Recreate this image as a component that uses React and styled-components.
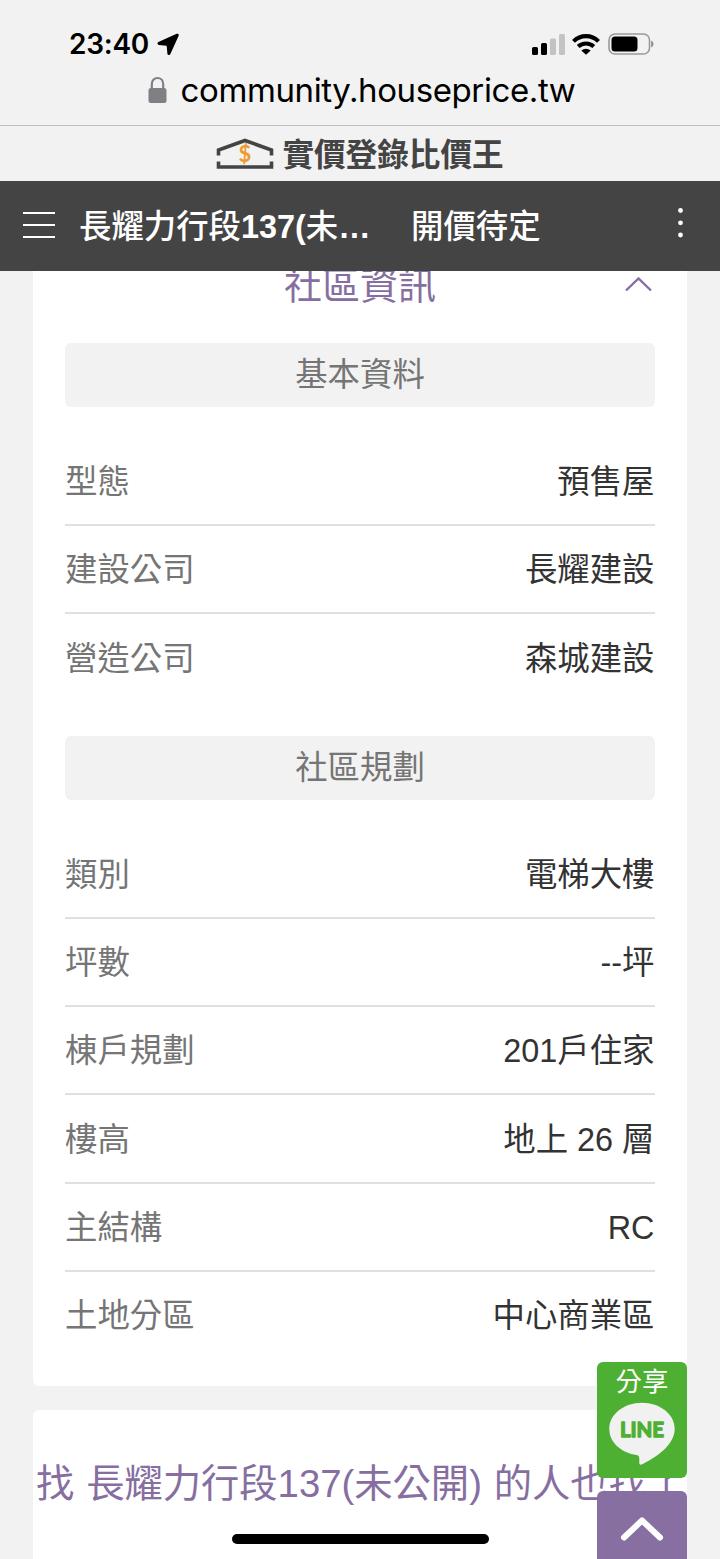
import React from "react";
import styled, { createGlobalStyle } from "styled-components";

const Global = createGlobalStyle`
  * { box-sizing: border-box; }
  html, body { margin: 0; background: #f2f2f2; }
  body { font-family: "Liberation Sans", "Noto Sans CJK TC", sans-serif; }
`;

const Screen = styled.div`
  position: relative;
  width: 720px;
  height: 1559px;
  overflow: hidden;
  display: flex;
  flex-direction: column;
  background: #f2f2f2;
`;

const BrowserChrome = styled.header`
  height: 126px;
  border-bottom: 1px solid #bfbfc1;
  font-family: Inter, "Liberation Sans", sans-serif;
  color: #000;
`;

const StatusBar = styled.div`
  display: flex;
  justify-content: space-between;
  align-items: center;
  height: 60px;
  padding: 28px 66px 0 69px;
`;

const StatusGroup = styled.div`
  display: flex;
  align-items: center;
  gap: ${(p) => p.$gap}px;
`;

const Clock = styled.span`
  font-size: 28px;
  line-height: 32px;
  font-weight: 600;
  letter-spacing: -0.25px;
`;

const AddressBar = styled.div`
  display: flex;
  justify-content: center;
  align-items: center;
  height: 60px;
  gap: 14px;
  padding-left: 3px;
`;

const Domain = styled.span`
  font-size: 33px;
  line-height: 40px;
  letter-spacing: -0.4px;
  white-space: nowrap;
`;

const BrandBar = styled.div`
  display: flex;
  justify-content: center;
  align-items: center;
  gap: 8px;
  height: 55px;
`;

const BrandName = styled.span`
  padding-bottom: 4px;
  font-family: "Noto Sans CJK TC", sans-serif;
  font-size: 31.6px;
  line-height: 40px;
  font-weight: 700;
  color: #444;
`;

const NavBar = styled.nav`
  display: flex;
  align-items: center;
  height: 90px;
  padding: 0 37px 0 23px;
  background: #444;
  color: #fff;
  font-size: 32.4px;
  line-height: 48px;
  white-space: nowrap;
`;

const NavTitle = styled.span`
  width: 292px;
  margin-left: 24px;
  padding-top: 2px;
  overflow: hidden;
  text-overflow: ellipsis;
  font-weight: 700;
`;

const MediumText = styled.span`
  font-weight: 500;
`;

const NavPrice = styled.span`
  margin-left: 40px;
  padding-top: 2px;
  flex: 1;
  font-weight: 500;
`;

const Content = styled.main`
  flex: 1;
  min-height: 0;
  overflow: hidden;
  padding: 0 33px;
`;

const InfoCard = styled.section`
  height: 1115px;
  padding: 0 32px;
  background: #fff;
  border-radius: 0 0 6px 6px;
`;

const CardHeading = styled.div`
  display: grid;
  grid-template-columns: 1fr auto 1fr;
  align-items: center;
  height: 72.4px;
  padding: 0 3px;
`;

const CardTitle = styled.h2`
  grid-column: 2;
  margin: -43px 0 0;
  font-size: 38px;
  line-height: 56px;
  font-weight: 400;
  color: #866ea1;
`;

const Toggle = styled.span`
  justify-self: end;
  display: flex;
  margin-top: -45px;
`;

const SectionLabel = styled.h3`
  height: 64px;
  margin: 0;
  border-radius: 6px;
  background: #f2f2f2;
  color: #757575;
  font-size: 32.4px;
  line-height: 64px;
  font-weight: 400;
  text-align: center;
`;

const Rows = styled.dl`
  margin: 30.2px 0 33.7px;
`;

const Row = styled.div`
  display: flex;
  justify-content: space-between;
  align-items: center;
  height: 88.3px;
  padding: 2.4px 0.5px 0 0;
  border-bottom: 2px solid #e0e0e0;
  font-size: 32.4px;
  line-height: 48px;
  &:last-child { border-bottom-color: transparent; }
`;

const Term = styled.dt`
  color: #757575;
`;

const Value = styled.dd`
  margin: 0;
  color: #333;
`;

const RelatedCard = styled.section`
  height: 200px;
  margin-top: 24px;
  padding: 44px 0 0 3px;
  overflow: hidden;
  background: #fff;
  border-radius: 6px 6px 0 0;
`;

const RelatedTitle = styled.h2`
  margin: 0;
  font-size: 38.3px;
  line-height: 60px;
  font-weight: 400;
  word-spacing: 1.2px;
  color: #866ea1;
  white-space: nowrap;
`;

const FloatingActions = styled.aside`
  position: absolute;
  right: 33px;
  bottom: 0;
  width: 90px;
  display: flex;
  flex-direction: column;
  gap: 13px;
`;

const ShareButton = styled.div`
  display: flex;
  flex-direction: column;
  align-items: center;
  height: 116px;
  border-radius: 6px;
  background: #4eb032;
  color: #fff;
  font-size: 26.4px;
  line-height: 40px;
`;

const TopButton = styled.div`
  display: flex;
  justify-content: center;
  height: 68px;
  padding-top: 23px;
  border-radius: 6px 6px 0 0;
  background: #876fa2;
`;

const HomeIndicator = styled.div`
  position: absolute;
  left: 231.5px;
  bottom: 15.5px;
  width: 257.5px;
  height: 9.5px;
  border-radius: 5px;
  background: #000;
`;

const basics = [
  ["型態", "預售屋"],
  ["建設公司", "長耀建設"],
  ["營造公司", "森城建設"],
];

const planning = [
  ["類別", "電梯大樓"],
  ["坪數", "--坪"],
  ["棟戶規劃", "201戶住家"],
  ["樓高", "地上 26 層"],
  ["主結構", "RC"],
  ["土地分區", "中心商業區"],
];

function InfoRows({ items }) {
  return (
    <Rows>
      {items.map(([term, value]) => (
        <Row key={term}>
          <Term>{term}</Term>
          <Value>{value}</Value>
        </Row>
      ))}
    </Rows>
  );
}

const LocationIcon = () => (
  <svg width="23" height="23" viewBox="0 0 23 23">
    <path d="M20.3 2.2 2 10.400 9.800 11.300 11.200 12.800 11.900 20.500Z" fill="#000" stroke="#000" strokeWidth="3" strokeLinejoin="round" />
  </svg>
);

const SignalIcon = () => (
  <svg width="33" height="21" viewBox="0 0 33 21">
    <rect x="0" y="13" width="6" height="8" rx="1.6" />
    <rect x="9" y="9" width="6" height="12" rx="1.6" />
    <rect x="18" y="4.5" width="6" height="16.5" rx="1.6" fill="#c3c3c3" />
    <rect x="27" y="0" width="6" height="21" rx="1.6" fill="#c3c3c3" />
  </svg>
);

const WifiIcon = () => (
  <svg width="28" height="21" viewBox="0 0 28 21" fill="none" stroke="#000" strokeWidth="4.1">
    <path d="M1.5 7.4C8.5.4 19.5.4 26.5 7.4" />
    <path d="M6.2 12.600C10.500 8.500 17.500 8.500 21.800 12.600" />
    <path d="M9.300 16.600Q14 12.700 18.700 16.600L14 20.800Z" fill="#000" stroke="none" />
  </svg>
);

const BatteryIcon = () => (
  <svg width="47" height="22" viewBox="0 0 47 22">
    <rect x="2" y="1" width="40.5" height="20" rx="6" fill="none" stroke="#9b9b9b" strokeWidth="1.6" />
    <rect x="4.5" y="3.5" width="26" height="15" rx="3.5" />
    <path d="M44.2 7.500Q46.500 8.500 46.500 11T44.200 14.500Z" fill="#8c8c8c" />
  </svg>
);

const LockIcon = () => (
  <svg width="19" height="28" viewBox="0 0 19 28">
    <path d="M3.800 14V8.200C3.800 -.1 15.200 -.1 15.200 8.200V14" fill="none" stroke="#808084" strokeWidth="2.2" />
    <rect x="0.5" y="12" width="18" height="15" rx="2.5" fill="#808084" />
  </svg>
);

const HouseIcon = () => (
  <svg width="58" height="32" viewBox="0 0 58 32">
    <path d="M2.500 17.500V12L29 2.500 55.500 12V17.500M2.500 23.500V29H55.500V23.500" fill="none" stroke="#444" strokeWidth="3.6" />
    <text x="29" y="24" textAnchor="middle" fontFamily="Lato, sans-serif" fontWeight="700" fontSize="22" fill="#ee9b2d">$</text>
  </svg>
);

const MenuIcon = () => (
  <svg width="32" height="28" viewBox="0 0 32 28" stroke="#fff" strokeWidth="2">
    <path d="M0 1H32M0 13H32M0 25H32" />
  </svg>
);

const MoreIcon = () => (
  <svg width="6" height="36" viewBox="0 0 6 36" fill="#fff">
    <circle cx="3.5" cy="2.5" r="2.4" />
    <circle cx="3.5" cy="14.8" r="2.4" />
    <circle cx="3.5" cy="27" r="2.4" />
  </svg>
);

const CollapseIcon = () => (
  <svg width="28" height="16" viewBox="0 0 28 16">
    <path d="M2 13.500 14.500 1.500 27 13.500" fill="none" stroke="#866ea1" strokeWidth="2.4" />
  </svg>
);

const LineLogo = () => (
  <svg width="66" height="64" viewBox="0 0 66 64">
    <path d="M33 .800C15 .800 .300 12.200 .300 27 .300 41 13 51 27.500 53 30.500 53.600 30.500 55 30.300 61 30.300 62.800 31.700 63 33 62.300 42 58 65.700 45 65.700 27 65.700 12.200 51 .800 33 .800Z" fill="#f1f1f1" />
    <text x="11" y="35.3" textLength="44" lengthAdjust="spacing" fontFamily="Lato, sans-serif" fontWeight="700" fontSize="20.5" fill="#4eb032" stroke="#4eb032" strokeWidth="1.3" strokeLinejoin="round">LINE</text>
  </svg>
);

const TopIcon = () => (
  <svg width="44" height="28" viewBox="0 0 44 28">
    <path d="M4 23.500 22 6.500 40 23.500" fill="none" stroke="#fff" strokeWidth="6" strokeLinecap="round" strokeLinejoin="round" />
  </svg>
);

export default function App() {
  return (
    <Screen>
      <Global />
      <BrowserChrome>
        <StatusBar>
          <StatusGroup $gap={8}>
            <Clock>23:40</Clock>
            <LocationIcon />
          </StatusGroup>
          <StatusGroup $gap={7}>
            <SignalIcon />
            <WifiIcon />
            <BatteryIcon />
          </StatusGroup>
        </StatusBar>
        <AddressBar>
          <LockIcon />
          <Domain>community.houseprice.tw</Domain>
        </AddressBar>
      </BrowserChrome>
      <BrandBar>
        <HouseIcon />
        <BrandName>實價登錄比價王</BrandName>
      </BrandBar>
      <NavBar>
        <MenuIcon />
        <NavTitle>
          <MediumText>長耀力行段</MediumText>137(<MediumText>未公開</MediumText>)
        </NavTitle>
        <NavPrice>開價待定</NavPrice>
        <MoreIcon />
      </NavBar>
      <Content>
        <InfoCard>
          <CardHeading>
            <CardTitle>社區資訊</CardTitle>
            <Toggle><CollapseIcon /></Toggle>
          </CardHeading>
          <SectionLabel>基本資料</SectionLabel>
          <InfoRows items={basics} />
          <SectionLabel>社區規劃</SectionLabel>
          <InfoRows items={planning} />
        </InfoCard>
        <RelatedCard>
          <RelatedTitle>找 長耀力行段137(未公開) 的人也找了</RelatedTitle>
        </RelatedCard>
      </Content>
      <FloatingActions>
        <ShareButton>
          分享
          <LineLogo />
        </ShareButton>
        <TopButton><TopIcon /></TopButton>
      </FloatingActions>
      <HomeIndicator />
    </Screen>
  );
}
